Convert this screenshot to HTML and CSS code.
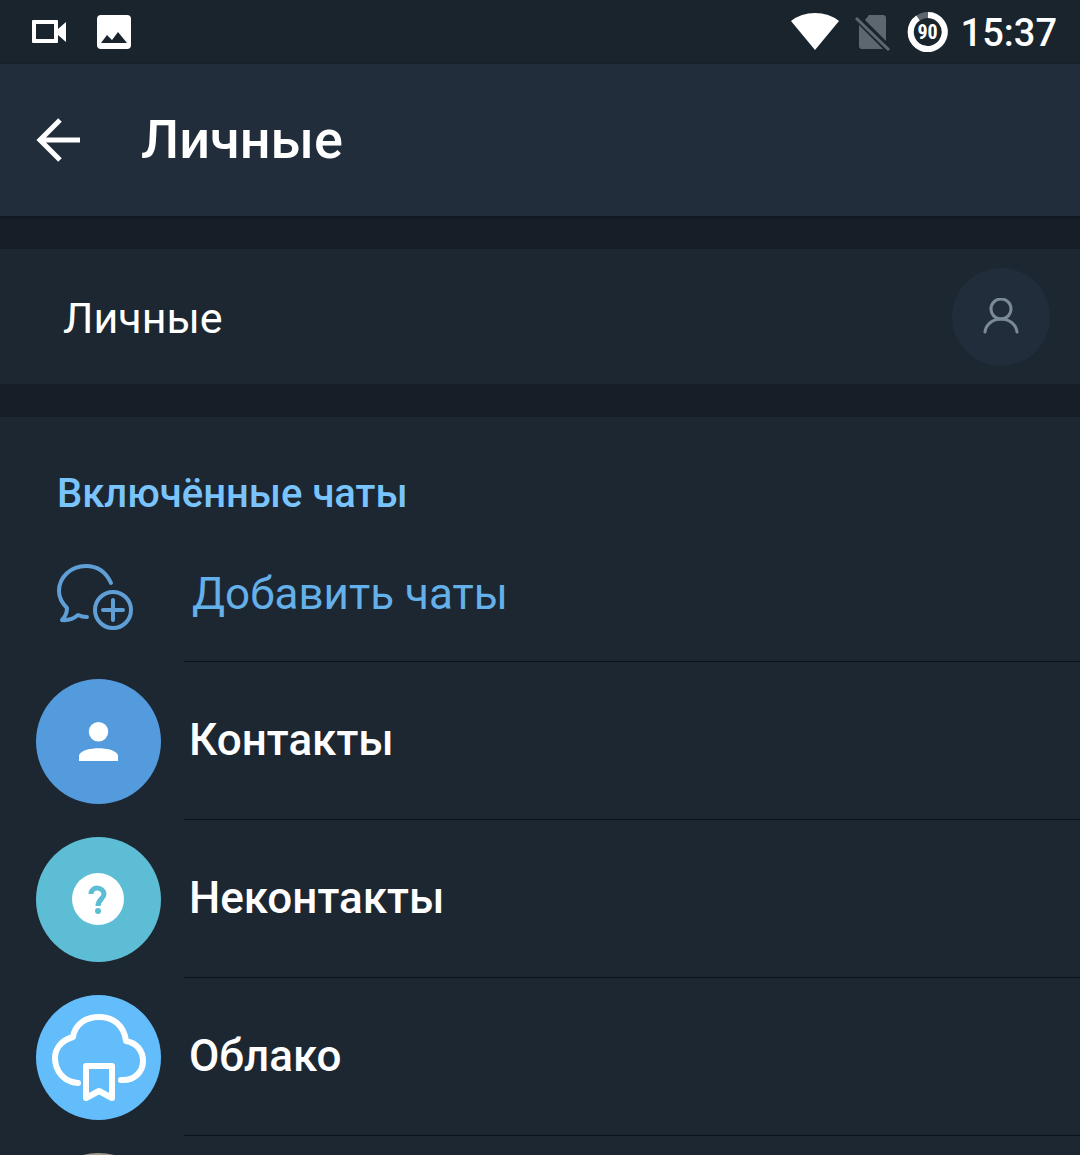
FILE: index.html
```html
<!DOCTYPE html>
<html lang="ru">
<head>
    <meta charset="utf-8">
    <meta name="viewport" content="width=device-width, initial-scale=1">
    <title>Личные</title>
    <link rel="stylesheet" href="styles.css">
</head>
<body>
<div class="screen">

    <!-- status bar -->
    <div class="status">
        <svg class="icon" width="34" height="24" viewBox="0 0 34 24">
            <path fill="#fff" fill-rule="evenodd" d="M1 0H25Q26 0 26 1V9L34 2V22L26 15V22Q26 23 25 23H1Q0 23 0 22V1Q0 0 1 0ZM4 4V19H22V4Z"/>
        </svg>
        <svg class="icon photo" width="34" height="34" viewBox="0 0 34 34">
            <path fill="#fff" fill-rule="evenodd" d="M4 0H30Q34 0 34 4V30Q34 34 30 34H4Q0 34 0 30V4Q0 0 4 0ZM4 28H30L21 17L15 25L10 20Z"/>
        </svg>
        <div class="status-right">
            <svg class="icon" width="48" height="38" viewBox="0 0 48 38">
                <path fill="#fff" d="M0 8Q10 0 24 0T48 8L24 37Z"/>
            </svg>
            <svg class="icon" width="36" height="38" viewBox="0 0 36 38">
                <path fill="#5f676e" d="M14 2H28Q31 2 31 5V28L10 7ZM4 12L28 36H7Q4 36 4 33Z"/>
                <path stroke="#5f676e" stroke-width="3" d="M1 5L34 37"/>
            </svg>
            <div class="battery">
                <svg class="icon" width="42" height="42" viewBox="0 0 42 42" fill="none" stroke-width="6">
                    <circle cx="21" cy="21" r="17" stroke="#5f676e"/>
                    <path stroke="#fff" d="M21 4A17 17 0 1 1 11 7"/>
                </svg>
                <span class="battery-level">90</span>
            </div>
            <span class="time">15:37</span>
        </div>
    </div>

    <header class="header">
        <button class="back" type="button" aria-label="Назад">
            <svg class="icon" width="44" height="44" viewBox="0 0 44 44" fill="none" stroke="#fff" stroke-width="5">
                <path d="M24 2L4 22L24 42M4 22H44"/>
            </svg>
        </button>
        <h1 class="title">Личные</h1>
    </header>

    <div class="name-row">
        <input class="name" type="text" value="Личные" aria-label="Название папки">
        <button class="folder-icon" type="button" aria-label="Значок папки">
            <svg class="icon" width="38" height="38" viewBox="0 0 38 38" fill="none" stroke="#7b8a98" stroke-width="3" stroke-linecap="round">
                <circle cx="19" cy="11" r="10"/>
                <path d="M3 34C4 26 11 21 19 21S34 26 35 34"/>
            </svg>
        </button>
    </div>

    <main class="chats">
        <h2 class="chats-title">Включённые чаты</h2>
        <button class="add" type="button">
            <span class="add-icon">
                <svg class="icon" width="78" height="68" viewBox="0 0 78 68" fill="none" stroke="#5f9fd6" stroke-width="4" stroke-linecap="round" stroke-linejoin="round">
                    <path d="M55 20C50 9 41 3 30 3C15 3 3 14 3 28C3 35 6 40 11 45Q11 52 6 57Q15 58 22 52Q26 54 31 54"/>
                    <circle cx="57" cy="47" r="18"/>
                    <path d="M57 37V57M47 47H67"/>
                </svg>
            </span>
            <span class="add-text">Добавить чаты</span>
        </button>

        <ul class="list">
            <li class="item">
                <span class="avatar contacts">
                    <svg class="icon" width="39" height="39" viewBox="0 0 40 40" fill="#fff">
                        <circle cx="20" cy="10" r="10"/>
                        <path d="M0 40V34C2 29 12 27 20 27S38 29 40 34V40Z"/>
                    </svg>
                </span>
                <span class="item-name">Контакты</span>
            </li>
            <li class="item">
                <span class="avatar non-contacts">
                    <svg class="icon" width="53" height="53" viewBox="0 0 53 53">
                        <circle cx="26" cy="26" r="26" fill="#fff"/>
                        <path fill="none" stroke="#5dbdd5" stroke-width="5" d="M19 21C19 17 22 15 25 15C29 15 32 18 32 21C32 26 26 26 26 33"/>
                        <circle cx="26" cy="38" r="3" fill="#5dbdd5"/>
                    </svg>
                </span>
                <span class="item-name">Неконтакты</span>
            </li>
            <li class="item">
                <span class="avatar cloud">
                    <svg class="icon" width="96" height="88" viewBox="0 0 96 88" fill="none" stroke="#fff" stroke-width="6" stroke-linecap="round" stroke-linejoin="round">
                        <path d="M27 70C13 69 4 58 4 45C4 35 11 27 22 24C24 11 35 4 48 4C62 4 73 12 75 28C86 30 92 38 92 48C92 59 83 68 70 67"/>
                        <path d="M35 53H61V85L48 78L35 85Z"/>
                    </svg>
                </span>
                <span class="item-name">Облако</span>
            </li>
            <li class="item">
                <span class="avatar user"></span>
            </li>
        </ul>
    </main>

</div>
</body>
</html>
```

FILE: styles.css
```css
*{
    box-sizing: border-box;
}
body{
    margin: 0;
    background-color: #161e27;
    color: #fff;
    font-family: Roboto, "Noto Sans", sans-serif;
}
button{
    padding: 0;
    border: 0;
    background: none;
    font: inherit;
    color: inherit;
    cursor: pointer;
}
.icon{
    display: block;
    flex: none;
}
.screen{
    height: 100vh;
    overflow: hidden;
}

/* status bar */
.status{
    display: flex;
    align-items: center;
    height: 64px;
    padding: 0 23px 0 32px;
    background-color: #1a242d;
}
.photo{
    margin-left: 31px;
}
.status-right{
    display: flex;
    align-items: center;
    gap: 16px;
    margin-left: auto;
}
.battery{
    position: relative;
}
.battery-level{
    position: absolute;
    top: 0;
    left: 0;
    width: 100%;
    font: bold 20px/42px "Roboto Condensed", "Liberation Sans Narrow", Roboto, sans-serif;
    text-align: center;
}
.time{
    margin-left: -4px;
    padding-top: 2px;
    font-size: 38px;
    font-weight: 500;
}

/* header */
.header{
    display: flex;
    align-items: center;
    height: 152px;
    padding: 0 36px;
    background-color: #212d3a;
    box-shadow: 0 1px 3px #0c151b;
}
.title{
    margin: 0 0 0 61px;
    padding-bottom: 2px;
    font-size: 54px;
    font-weight: 500;
}

/* folder name */
.name-row{
    display: flex;
    align-items: center;
    height: 135px;
    margin: 33px 0;
    padding: 0 30px 0 63px;
    background-color: #1d2731;
}
.name{
    flex: 1;
    min-width: 0;
    padding: 2px 0 0;
    border: 0;
    outline: 0;
    background: none;
    color: #fff;
    font: 43px Roboto, "Noto Sans", sans-serif;
}
.folder-icon{
    display: flex;
    align-items: center;
    justify-content: center;
    width: 98px;
    height: 98px;
    border-radius: 50%;
    background-color: #212d3a;
}

/* chats */
.chats{
    background-color: #1d2731;
}
.chats-title{
    margin: 0;
    padding: 52px 57px 0;
    font-size: 40px;
    font-weight: 500;
    line-height: 50px;
    color: #79c4fc;
}
.add{
    display: flex;
    align-items: center;
    width: 100%;
    height: 142px;
    padding-top: 8px;
    text-align: left;
    color: #64b0ea;
}
.add-icon{
    width: 192px;
    padding: 6px 0 0 56px;
}
.add-text{
    font-size: 44px;
}
.list{
    margin: 0;
    padding: 0;
    list-style: none;
}
.item{
    display: flex;
    align-items: center;
    height: 158px;
    padding: 2px 0 0 36px;
    /* divider starts after the avatar */
    background: linear-gradient(#0b1219, #0b1219) 184px 0 / 100% 1px no-repeat;
}
.avatar{
    display: flex;
    align-items: center;
    justify-content: center;
    width: 125px;
    height: 125px;
    margin-right: 28px;
    border-radius: 50%;
}
.contacts{
    background-color: #539bdd;
}
.non-contacts{
    background-color: #5dbdd5;
}
.cloud{
    background-color: #64bdfb;
}
.user{
    background-color: #a09a8c;
}
.item-name{
    padding-bottom: 3px;
    font-size: 44px;
    font-weight: 500;
}
```
